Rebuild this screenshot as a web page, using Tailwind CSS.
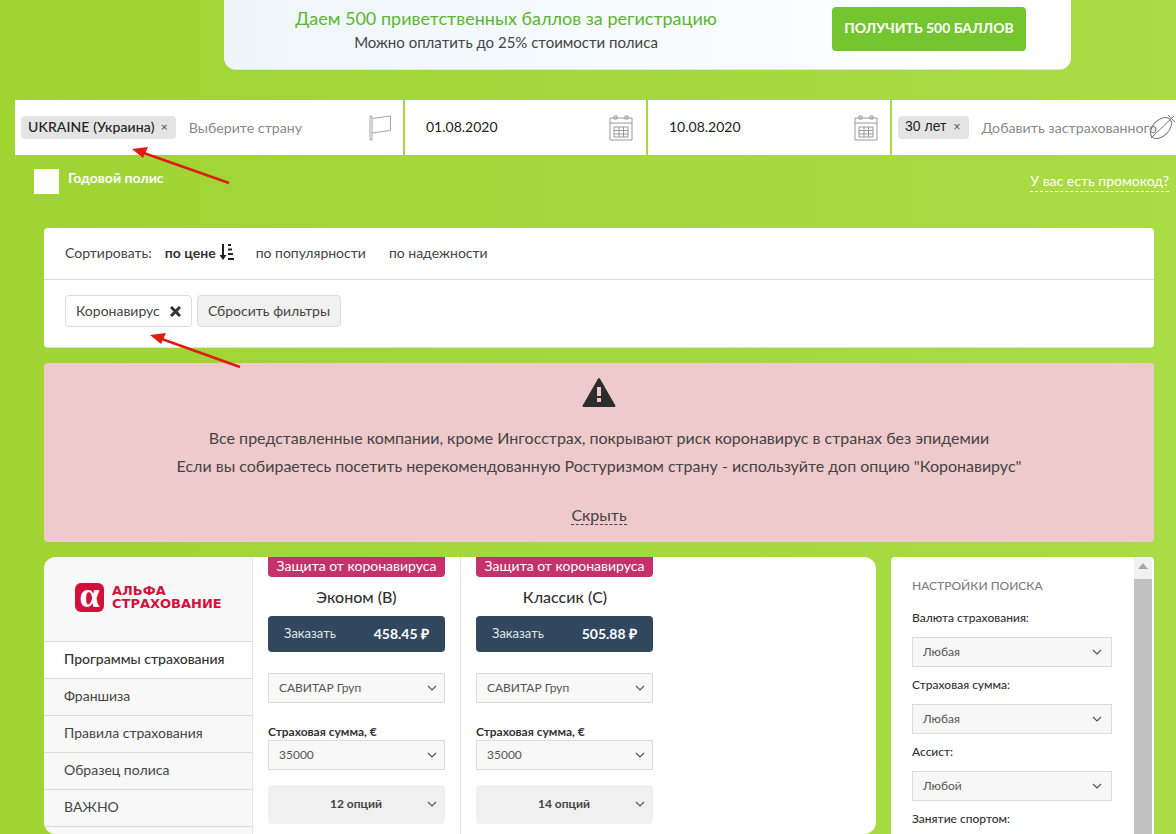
<!DOCTYPE html>
<html lang="ru">
<head>
  <meta charset="UTF-8" />
  <title>Страхование</title>
  <script src="https://cdn.jsdelivr.net/npm/@tailwindcss/browser@4"></script>
</head>
<body class="relative h-[834px] w-[1176px] overflow-hidden bg-gradient-to-r from-[#a0d433] to-[#a9dc45] font-['Lato','Open_Sans',sans-serif] text-[#333]">

<!-- promo banner -->
<section class="ml-[224px] flex h-[70px] w-[847px] rounded-b-xl border-b border-[#dfe8d8] bg-gradient-to-r from-[#eef6fc] to-white">
  <div class="w-[564px] pt-[6px] text-center">
    <p class="text-[18px] leading-[24px] text-[#5cb531]">Даем 500 приветственных баллов за регистрацию</p>
    <p class="mt-[2px] text-[15px] leading-[20px] text-[#444]">Можно оплатить до 25% стоимости полиса</p>
  </div>
  <a class="ml-[44px] mt-[7px] flex h-[44px] w-[194px] items-center justify-center rounded bg-[#74c52f] pb-[3px] text-[14px] font-bold text-white">ПОЛУЧИТЬ 500 БАЛЛОВ</a>
</section>

<!-- search row -->
<section class="ml-[15px] mt-[30px] flex h-[55px] gap-[2px] text-[14px]">
  <div class="flex w-[388px] items-center bg-white pl-[6px] pr-[11px]">
    <span class="flex h-[23px] items-center rounded bg-[#e4e4e4] pb-[2px] pl-[7px] pr-[8px] text-[14px] font-medium tracking-[0.1px] text-[#222]">UKRAINE (Украина)<span class="ml-[6px] text-[12px] text-[#555]">×</span></span>
    <span class="ml-[13px] text-[14.200px] text-[#8a8a8a]">Выберите страну</span>
    <svg class="ml-auto" width="24" height="26" viewBox="0 0 24 26" fill="none" stroke="#a5a5a5"><path d="M2 1v24M4 1v24M2 25h2M2 1h2M4 3.500 22.500 1v14.500L4 18"/></svg>
  </div>
  <div class="flex w-[241px] items-center justify-between bg-white pl-[21px] pr-[13px] text-[#222]">
    <span class="pb-[2px]">01.08.2020</span>
    <svg width="24" height="26" viewBox="0 0 24 26" fill="none" stroke="#999"><path d="M1 3h22v22H1zM1 8h22M5 1h3v3H5zM16 1h3v3h-3zM5 12h14v10H5zM5 15.500h14M5 19h14M10 12v10M14.500 12v10"/></svg>
  </div>
  <div class="flex w-[242px] items-center justify-between bg-white pl-[21px] pr-[12px] text-[#222]">
    <span class="pb-[2px]">10.08.2020</span>
    <svg width="24" height="26" viewBox="0 0 24 26" fill="none" stroke="#999"><path d="M1 3h22v22H1zM1 8h22M5 1h3v3H5zM16 1h3v3h-3zM5 12h14v10H5zM5 15.500h14M5 19h14M10 12v10M14.500 12v10"/></svg>
  </div>
  <div class="relative flex flex-1 items-center overflow-hidden bg-white pl-[6px]">
    <span class="flex h-[23px] items-center rounded bg-[#e4e4e4] pb-[2px] pl-[7px] pr-[9px] font-['Liberation_Sans',sans-serif] text-[14px] text-[#222]">30 лет<span class="ml-[7px] text-[12px] text-[#555]">×</span></span>
    <span class="ml-[12px] whitespace-nowrap text-[14.200px] text-[#8a8a8a]">Добавить застрахованного</span>
    <svg class="absolute left-[256px] top-[14px]" width="28" height="27" viewBox="0 0 28 27" fill="none" stroke="#777"><ellipse cx="13" cy="14" rx="12.500" ry="8" transform="rotate(-45 13 14)"/><path d="M3 24 26 2M20 1l7 7"/></svg>
  </div>
</section>

<section class="relative h-[73px]">
  <div class="absolute left-[34px] top-[14px] h-[25px] w-[25px] bg-white"></div>
  <span class="absolute left-[68px] top-[12px] text-[14px] font-bold text-white">Годовой полис</span>
  <a class="absolute right-[7px] top-[16px] border-b border-dashed border-white text-[14px] leading-[20px] text-white">У вас есть промокод?</a>
</section>

<!-- sort and filters -->
<section class="ml-[44px] h-[120px] w-[1110px] rounded border-b border-[#dde5d0] bg-white">
  <div class="flex h-[52px] items-center border-b border-[#dcdcdc] pb-[3px] pl-[21px] text-[14px] text-[#444]">
    <span>Сортировать:</span>
    <b class="ml-[13px] font-bold text-[#333]">по цене</b>
    <svg class="ml-[4px]" width="14" height="16" viewBox="0 0 14 16" fill="#222"><path d="M2 0h2v11h2.500L3 16-.500 11H2zM8 0h3v2H8zM8 4.500h4v2H8zM8 9h5v2H8zM8 14h6v2H8z"/></svg>
    <span class="ml-[22px]">по популярности</span>
    <span class="ml-[23px]">по надежности</span>
  </div>
  <div class="flex gap-[5px] pl-[21px] pt-[15px] text-[14px]">
    <span class="flex h-[32px] w-[127px] items-center rounded border border-[#ddd] pb-[2px] pl-[10px] text-[#444]">Коронавирус
      <svg class="ml-[10px] mt-[2px]" width="11" height="11" viewBox="0 0 11 11" stroke="#333" stroke-width="3"><path d="M1 1l9 9M10 1l-9 9"/></svg>
    </span>
    <span class="flex h-[32px] w-[144px] items-center justify-center rounded border border-[#ddd] bg-[#f1f1f1] pb-[2px] text-[#444]">Сбросить фильтры</span>
  </div>
</section>

<!-- warning -->
<section class="ml-[44px] mt-[15px] flex h-[179px] w-[1110px] flex-col items-center rounded bg-[#eecacc] text-[16px] text-[#444]">
  <svg class="mt-[14px]" width="34" height="31" viewBox="0 0 34 31"><path fill="#2d2d2d" stroke="#2d2d2d" stroke-width="2" stroke-linejoin="round" d="M17 2 32.500 29h-31z"/><path fill="#eecacc" d="M15 10h4v9h-4zM15 21h4v4h-4z"/></svg>
  <p class="mt-[16px] leading-[27px]">Все представленные компании, кроме Ингосстрах, покрывают риск коронавирус в странах без эпидемии</p>
  <p class="mt-[1px] leading-[27px]">Если вы собираетесь посетить нерекомендованную Ростуризмом страну - используйте доп опцию "Коронавирус"</p>
  <a class="mt-[26px] border-b border-dashed border-[#444] leading-[19px]">Скрыть</a>
</section>

<div class="ml-[44px] mt-[15px] flex gap-[15px]">
  <!-- programs -->
  <section class="flex h-[277px] w-[832px] overflow-hidden rounded-xl bg-white">
    <aside class="w-[209px] border-r border-[#e4e4e4] bg-[#f8f8f8] text-[14px] text-[#444]">
      <div class="flex h-[84px] items-center pb-[4px] pl-[31px]">
        <span class="flex h-[29px] w-[29px] items-center justify-center rounded-[6px] bg-[#d3103a] pb-[5px] font-['Liberation_Serif',serif] text-[36px] font-bold leading-none text-white">α</span>
        <span class="ml-[8px] font-['DejaVu_Sans',sans-serif] text-[13px] font-bold leading-[13px] text-[#d3103a]">АЛЬФА<br>СТРАХОВАНИЕ</span>
      </div>
      <div class="flex h-[38px] items-center border-y border-[#dcdcdc] bg-white pb-[3px] pl-[20px] font-medium text-[#333]">Программы страхования</div>
      <div class="flex h-[37px] items-center border-b border-[#dcdcdc] pb-[3px] pl-[20px]">Франшиза</div>
      <div class="flex h-[37px] items-center border-b border-[#dcdcdc] pb-[3px] pl-[20px]">Правила страхования</div>
      <div class="flex h-[37px] items-center border-b border-[#dcdcdc] pb-[3px] pl-[20px]">Образец полиса</div>
      <div class="flex h-[37px] items-center border-b border-[#dcdcdc] pb-[3px] pl-[20px]">ВАЖНО</div>
    </aside>

    <div class="w-[208px] border-r border-[#e4e4e4] pl-[15px] pr-[15px]">
      <div class="flex h-[20px] w-[177px] items-center justify-center rounded-b bg-[#c5326b] pb-[3px] text-[14px] text-white">Защита от коронавируса</div>
      <h3 class="mt-[9px] text-center text-[16px] font-medium leading-[22px] text-[#333]">Эконом (B)</h3>
      <a class="mt-[8px] flex h-[36px] w-[177px] items-center justify-between rounded bg-[#31475e] pb-[1px] pl-[16px] pr-[16px] text-[13px] text-white"><span class="text-[#dfe5ea]">Заказать</span><b class="text-[14px]">458.45 ₽</b></a>
      <div class="mt-[21px] flex h-[30px] w-[177px] items-center justify-between border border-[#dcdcdc] bg-[#f8f8f8] pl-[10px] pr-[6px] text-[12px] text-[#555]">САВИТАР Груп
        <svg width="12" height="8" viewBox="0 0 12 8" fill="none" stroke="#555" stroke-width="1.200"><path d="M2 2l4 4 4-4"/></svg>
      </div>
      <p class="mt-[20px] text-[12px] font-bold leading-[17px] text-[#333]">Страховая сумма, €</p>
      <div class="flex h-[30px] w-[177px] items-center justify-between border border-[#dcdcdc] bg-[#f8f8f8] pl-[10px] pr-[6px] text-[12px] text-[#555]">35000
        <svg width="12" height="8" viewBox="0 0 12 8" fill="none" stroke="#555" stroke-width="1.200"><path d="M2 2l4 4 4-4"/></svg>
      </div>
      <div class="mt-[15px] flex h-[39px] w-[177px] items-center justify-between rounded bg-[#f0f0f0] pb-[2px] pl-[62px] pr-[7px] text-[12px] font-bold text-[#444]">12 опций
        <svg width="12" height="8" viewBox="0 0 12 8" fill="none" stroke="#555" stroke-width="1.200"><path d="M2 2l4 4 4-4"/></svg>
      </div>
    </div>

    <div class="w-[208px] pl-[15px]">
      <div class="flex h-[20px] w-[177px] items-center justify-center rounded-b bg-[#c5326b] pb-[3px] text-[14px] text-white">Защита от коронавируса</div>
      <h3 class="mt-[9px] pr-[15px] text-center text-[16px] font-medium leading-[22px] text-[#333]">Классик (C)</h3>
      <a class="mt-[8px] flex h-[36px] w-[177px] items-center justify-between rounded bg-[#31475e] pb-[1px] pl-[16px] pr-[16px] text-[13px] text-white"><span class="text-[#dfe5ea]">Заказать</span><b class="text-[14px]">505.88 ₽</b></a>
      <div class="mt-[21px] flex h-[30px] w-[177px] items-center justify-between border border-[#dcdcdc] bg-[#f8f8f8] pl-[10px] pr-[6px] text-[12px] text-[#555]">САВИТАР Груп
        <svg width="12" height="8" viewBox="0 0 12 8" fill="none" stroke="#555" stroke-width="1.200"><path d="M2 2l4 4 4-4"/></svg>
      </div>
      <p class="mt-[20px] text-[12px] font-bold leading-[17px] text-[#333]">Страховая сумма, €</p>
      <div class="flex h-[30px] w-[177px] items-center justify-between border border-[#dcdcdc] bg-[#f8f8f8] pl-[10px] pr-[6px] text-[12px] text-[#555]">35000
        <svg width="12" height="8" viewBox="0 0 12 8" fill="none" stroke="#555" stroke-width="1.200"><path d="M2 2l4 4 4-4"/></svg>
      </div>
      <div class="mt-[15px] flex h-[39px] w-[177px] items-center justify-between rounded bg-[#f0f0f0] pb-[2px] pl-[62px] pr-[7px] text-[12px] font-bold text-[#444]">14 опций
        <svg width="12" height="8" viewBox="0 0 12 8" fill="none" stroke="#555" stroke-width="1.200"><path d="M2 2l4 4 4-4"/></svg>
      </div>
    </div>
  </section>

  <!-- search settings -->
  <aside class="relative h-[277px] w-[263px] overflow-hidden rounded-t bg-white pl-[21px] pt-[21px]">
    <h4 class="text-[12px] font-medium leading-[16px] text-[#808080]">НАСТРОЙКИ ПОИСКА</h4>
    <p class="mt-[16px] text-[12px] font-medium leading-[16px]">Валюта страхования:</p>
    <div class="mt-[11px] flex h-[30px] w-[200px] items-center justify-between border border-[#dcdcdc] bg-[#f7f7f7] pl-[10px] pr-[8px] text-[12px] text-[#555]">Любая
      <svg width="12" height="8" viewBox="0 0 12 8" fill="none" stroke="#555" stroke-width="1.200"><path d="M2 2l4 4 4-4"/></svg>
    </div>
    <p class="mt-[10px] text-[12px] font-medium leading-[16px]">Страховая сумма:</p>
    <div class="mt-[11px] flex h-[30px] w-[200px] items-center justify-between border border-[#dcdcdc] bg-[#f7f7f7] pl-[10px] pr-[8px] text-[12px] text-[#555]">Любая
      <svg width="12" height="8" viewBox="0 0 12 8" fill="none" stroke="#555" stroke-width="1.200"><path d="M2 2l4 4 4-4"/></svg>
    </div>
    <p class="mt-[10px] text-[12px] font-medium leading-[16px]">Ассист:</p>
    <div class="mt-[11px] flex h-[30px] w-[200px] items-center justify-between border border-[#dcdcdc] bg-[#f7f7f7] pl-[10px] pr-[8px] text-[12px] text-[#555]">Любой
      <svg width="12" height="8" viewBox="0 0 12 8" fill="none" stroke="#555" stroke-width="1.200"><path d="M2 2l4 4 4-4"/></svg>
    </div>
    <p class="mt-[10px] text-[12px] font-medium leading-[16px]">Занятие спортом:</p>
    <!-- scrollbar -->
    <div class="absolute right-[2px] top-0 h-full w-[18px] overflow-hidden bg-[#f1f1f1]">
      <svg class="mx-auto mt-[6px]" width="10" height="6" viewBox="0 0 10 6" fill="#a8a8a8"><path d="M5 0l5 6H0z"/></svg>
      <div class="mt-[10px] h-full bg-[#c1c1c1]"></div>
    </div>
  </aside>
</div>

<!-- red annotation arrows -->
<svg class="absolute left-0 top-0" width="1176" height="834" fill="none" stroke="#e11a14" stroke-width="2.500">
  <path d="M229 183 141 152"/><path fill="#e11a14" stroke="none" d="M132 149l16-2-5 11z"/>
  <path d="M240 367 159 338"/><path fill="#e11a14" stroke="none" d="M150 335l16-2-5 11z"/>
</svg>

</body>
</html>
